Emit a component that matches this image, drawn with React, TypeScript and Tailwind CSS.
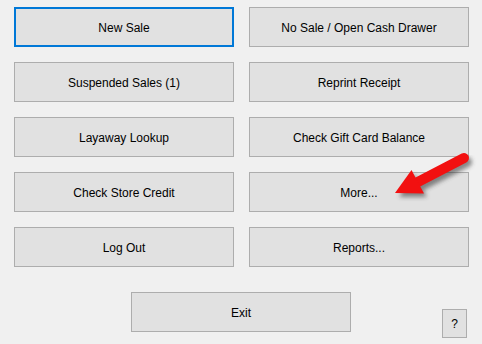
import React from "react";

const btn =
  "h-[40px] w-[220px] pt-[1px] bg-[#e1e1e1] border border-[#adadad] text-[12px] text-[#000] flex items-center justify-center";

export default function App() {
  const left = ["New Sale", "Suspended Sales (1)", "Layaway Lookup", "Check Store Credit", "Log Out"];
  const right = ["No Sale / Open Cash Drawer", "Reprint Receipt", "Check Gift Card Balance", "More...", "Reports..."];
  return (
    <div
      className="relative w-[482px] h-[344px] bg-[#f0f0f0] overflow-hidden"
      style={{ fontFamily: '"Segoe UI", "Liberation Sans", Arial, sans-serif' }}
    >
      <div className="pt-[7px] pl-[14px] grid grid-cols-[220px_220px] gap-x-[15px] gap-y-[15px]">
        {left.map((l, i) => (
          <React.Fragment key={l}>
            <div
              className={
                i === 0
                  ? "h-[40px] w-[220px] pt-[1px] bg-[#e1e1e1] border-2 border-[#0078d7] text-[12px] text-[#000] flex items-center justify-center"
                  : btn
              }
            >
              {l}
            </div>
            <div className={btn}>{right[i]}</div>
          </React.Fragment>
        ))}
      </div>
      <div className="flex items-start mt-[25px]">
        <div className={btn + " ml-[131px]"}>Exit</div>
        <div className="ml-[91px] mt-[17px] w-[25px] h-[29px] pt-[1px] bg-[#e1e1e1] border border-[#adadad] text-[12px] flex items-center justify-center">
          ?
        </div>
      </div>
      <svg className="absolute left-0 top-0 pointer-events-none" width="482" height="344">
        <defs>
          <filter id="blur" x="-20%" y="-20%" width="140%" height="140%">
            <feGaussianBlur stdDeviation="2" />
          </filter>
        </defs>
        <g transform="translate(3,4)" filter="url(#blur)" opacity="0.55">
          <line x1="464" y1="158" x2="414" y2="184" stroke="#333" strokeWidth="10" strokeLinecap="round" />
          <polygon points="396,193 411,170 424,193" fill="#333" />
        </g>
        <line x1="464" y1="158" x2="414" y2="184" stroke="#f21010" strokeWidth="10" strokeLinecap="round" />
        <polygon points="395,193 411.5,170 424,193.5" fill="#f21010" />
      </svg>
    </div>
  );
}
